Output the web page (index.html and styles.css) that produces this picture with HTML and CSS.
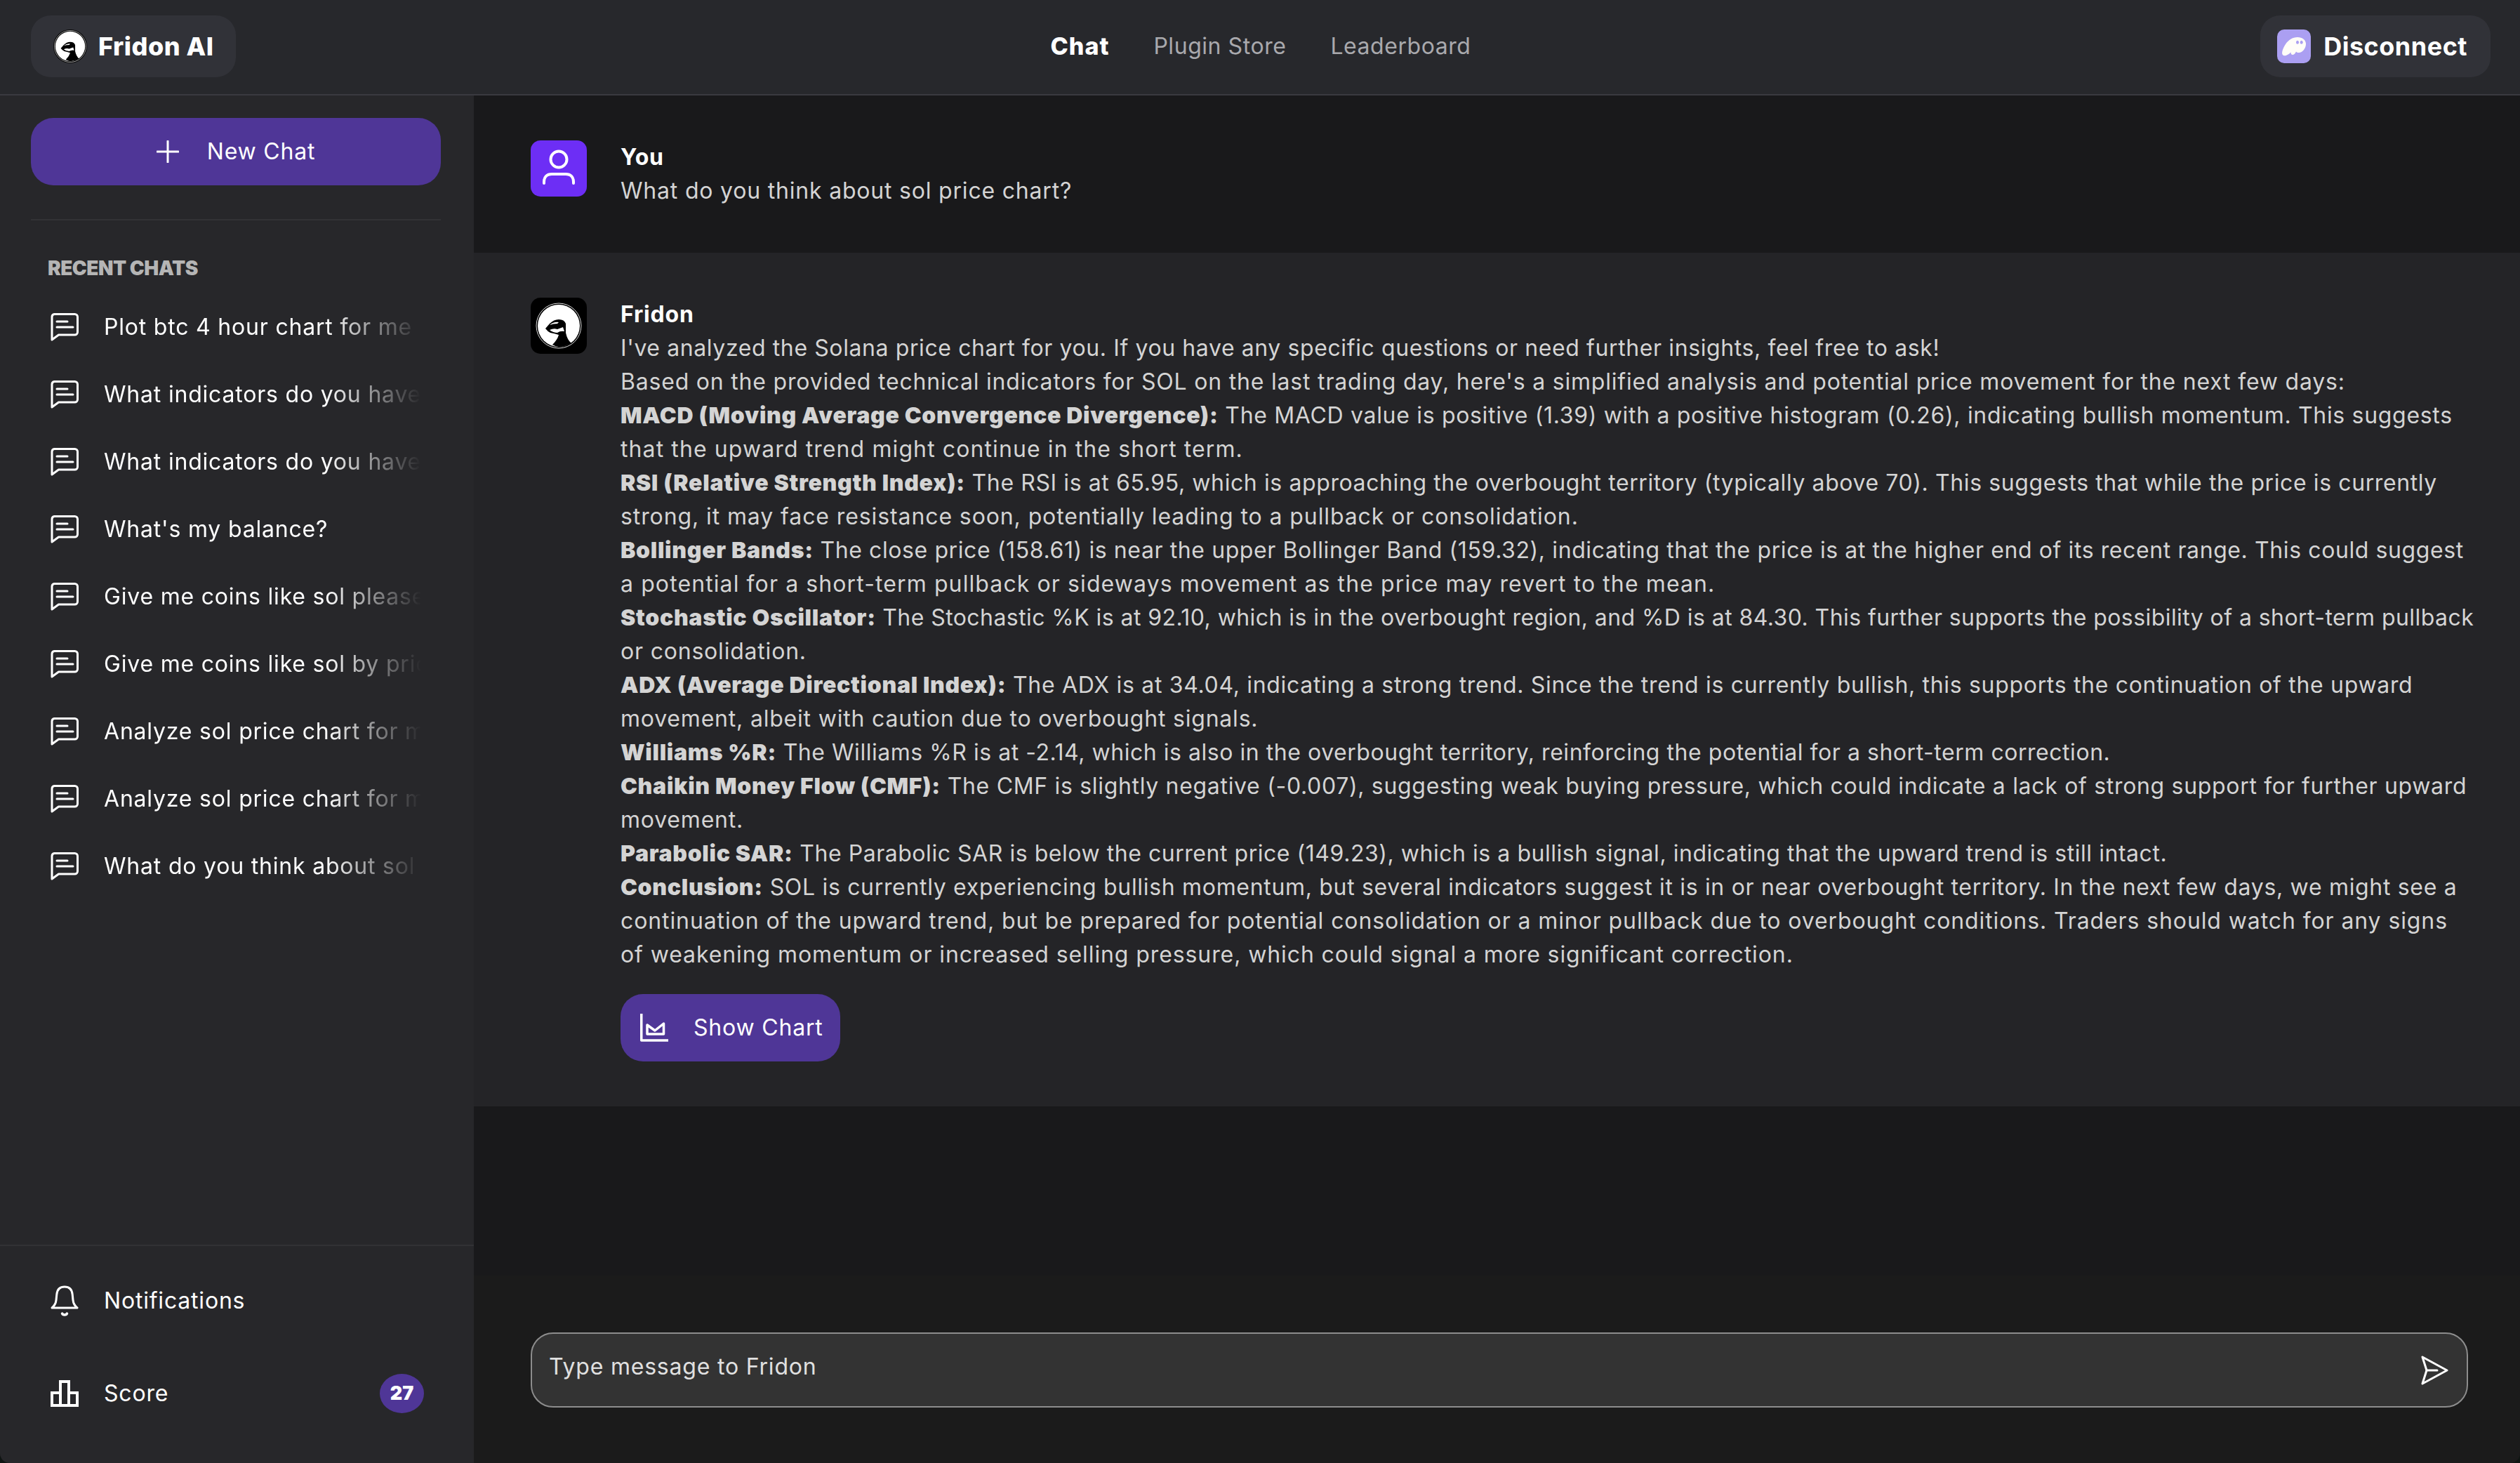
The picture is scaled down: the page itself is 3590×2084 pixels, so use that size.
FILE: index.html
```html
<!DOCTYPE html>
<html lang="en">
<head>
    <meta charset="UTF-8">
    <title>Fridon AI</title>
    <link rel="stylesheet" href="styles.css">
</head>
<body>
    <!-- shared icons -->
    <svg class="sprite">
        <defs>
            <g id="meerkat">
                <circle cx="40" cy="40" r="34" fill="#000"/>
                <circle cx="40" cy="40" r="32" fill="none" stroke="#ddd" stroke-width="1"/>
                <circle cx="40" cy="40" r="30" fill="#fff"/>
                <path d="M21 44L27 37Q33 31 40 31Q48 31 50 37Q50 44 50 50Q52 60 58 65Q49 70 40 70Q36 70 31 67Q38 60 40 53Q34 51 28 50Q24 48 21 44z" fill="#000"/>
                <path d="M27 46Q33 43 38 45L46 42L48 48Q42 47 38 50Q32 50 27 46z" fill="#fff"/>
                <path d="M27 39Q33 34 40 35L38 37Q32 37 27 39z" fill="#fff"/>
            </g>
            <symbol id="chat" viewBox="0 0 40 40">
                <path d="M5.500 1.500h29a4 4 0 0 1 4 4v21.500a4 4 0 0 1-4 4H11.500L2 38V5.500a4 4 0 0 1 3.500-4z" fill="none" stroke="#fff" stroke-width="3" stroke-linejoin="round" stroke-linecap="round"/>
                <path d="M9 12h15M9 20h23" fill="none" stroke="#fff" stroke-width="3" stroke-linecap="round"/>
            </symbol>
        </defs>
    </svg>

    <div class="app">
        <header class="topbar">
            <div class="topbar-left">
                <div class="pill">
                    <svg class="pill-logo" viewBox="6 6 68 68"><use href="#meerkat"/></svg>
                    <span class="brand">Fridon AI</span>
                </div>
            </div>
            <nav class="nav">
                <a class="nav-link nav-active">Chat</a>
                <a class="nav-link">Plugin Store</a>
                <a class="nav-link">Leaderboard</a>
            </nav>
            <div class="topbar-right">
                <div class="pill pill-wallet">
                    <svg class="wallet-icon" viewBox="0 0 48 48">
                        <rect width="48" height="48" rx="10" fill="#ab9ff2"/>
                        <path d="M9 37C5 35 8 27 12 21C16 15 22 11 29 11C36 11 41 15 41 20.500C41 27 36 33 31 33C29 33 28 32.500 27 31.500C26 34 24 36 22 36C20 36 19.500 34 19.500 32.500C17 35 12 38.500 9 37z" fill="#fffdf8"/>
                        <ellipse cx="29" cy="18.300" rx="2" ry="2.500" fill="#ab9ff2"/>
                        <ellipse cx="34.700" cy="18.300" rx="2" ry="2.500" fill="#ab9ff2"/>
                    </svg>
                    <span class="wallet-text">Disconnect</span>
                </div>
            </div>
        </header>

        <div class="body">
            <aside class="sidebar">
                <div class="sidebar-top">
                    <button class="btn-new">
                        <svg class="icon-plus" viewBox="0 0 32 32" fill="none" stroke="#fff" stroke-width="3" stroke-linecap="round"><path d="M16 1v30M1 16h30"/></svg>
                        <span>New Chat</span>
                    </button>
                    <div class="sidebar-line"></div>
                    <div class="recent-title">RECENT CHATS</div>
                    <ul class="chat-list">
                        <li class="chat-item"><svg class="icon-chat"><use href="#chat"/></svg><span class="chat-name">Plot btc 4 hour chart for me p</span></li>
                        <li class="chat-item"><svg class="icon-chat"><use href="#chat"/></svg><span class="chat-name">What indicators do you have</span></li>
                        <li class="chat-item"><svg class="icon-chat"><use href="#chat"/></svg><span class="chat-name">What indicators do you have</span></li>
                        <li class="chat-item"><svg class="icon-chat"><use href="#chat"/></svg><span class="chat-name">What's my balance?</span></li>
                        <li class="chat-item"><svg class="icon-chat"><use href="#chat"/></svg><span class="chat-name">Give me coins like sol please</span></li>
                        <li class="chat-item"><svg class="icon-chat"><use href="#chat"/></svg><span class="chat-name">Give me coins like sol by pric</span></li>
                        <li class="chat-item"><svg class="icon-chat"><use href="#chat"/></svg><span class="chat-name">Analyze sol price chart for m</span></li>
                        <li class="chat-item"><svg class="icon-chat"><use href="#chat"/></svg><span class="chat-name">Analyze sol price chart for m</span></li>
                        <li class="chat-item"><svg class="icon-chat"><use href="#chat"/></svg><span class="chat-name">What do you think about sol</span></li>
                    </ul>
                </div>
                <div class="sidebar-bottom">
                    <div class="foot-item">
                        <svg class="icon-foot" viewBox="0 0 40 46" fill="none" stroke="#fff" stroke-width="3" stroke-linejoin="round" stroke-linecap="round"><path d="M2 33c3.500-3 5.500-6 6-11l.800-8C9.500 6 14 3 20 3s10.500 3 11.200 11l.800 8c.500 5 2.500 8 6 11z"/><path d="M16.500 41c1 2.500 6 2.500 7 0" stroke-width="3.500"/></svg>
                        <span>Notifications</span>
                    </div>
                    <div class="foot-item">
                        <svg class="icon-foot" viewBox="0 0 40 46" fill="none" stroke="#fff" stroke-width="4"><path d="M2 40V22h12v18zM14 40V6h12v34zM26 40V22h12v18z"/></svg>
                        <span>Score</span>
                        <span class="badge">27</span>
                    </div>
                </div>
            </aside>

            <main class="main">
                <div class="messages">
                    <section class="msg">
                        <div class="avatar avatar-user">
                            <svg viewBox="0 0 80 80" fill="none" stroke="#fff" stroke-width="4" stroke-linecap="round"><circle cx="40" cy="27" r="11.500"/><path d="M19 61v-2c0-7 4-11 11-11h20c7 0 11 4 11 11v2"/></svg>
                        </div>
                        <div class="msg-body">
                            <div class="msg-author">You</div>
                            <div class="msg-text">What do you think about sol price chart?</div>
                        </div>
                    </section>
                    <section class="msg msg-ai">
                        <div class="avatar avatar-ai">
                            <svg viewBox="0 0 80 80"><use href="#meerkat"/></svg>
                        </div>
                        <div class="msg-body">
                            <div class="msg-author">Fridon</div>
                            <div class="msg-text">
                                <span class="line sp-b">I've analyzed the Solana price chart for you. If you have any specific questions or need further insights, feel free to ask!</span>
                                <span class="line">Based on the provided technical indicators for SOL on the last trading day, here's a simplified analysis and potential price movement for the next few days:</span>
                                <span class="line sp-c"><b>MACD (Moving Average Convergence Divergence):</b> The MACD value is positive (1.39) with a positive histogram (0.26), indicating bullish momentum. This suggests</span>
                                <span class="line sp-e">that the upward trend might continue in the short term.</span>
                                <span class="line sp-b"><b>RSI (Relative Strength Index):</b> The RSI is at 65.95, which is approaching the overbought territory (typically above 70). This suggests that while the price is currently</span>
                                <span class="line sp-d">strong, it may face resistance soon, potentially leading to a pullback or consolidation.</span>
                                <span class="line sp-b"><b>Bollinger Bands:</b> The close price (158.61) is near the upper Bollinger Band (159.32), indicating that the price is at the higher end of its recent range. This could suggest</span>
                                <span class="line sp-e">a potential for a short-term pullback or sideways movement as the price may revert to the mean.</span>
                                <span class="line sp-a"><b>Stochastic Oscillator:</b> The Stochastic %K is at 92.10, which is in the overbought region, and %D is at 84.30. This further supports the possibility of a short-term pullback</span>
                                <span class="line">or consolidation.</span>
                                <span class="line sp-c"><b>ADX (Average Directional Index):</b> The ADX is at 34.04, indicating a strong trend. Since the trend is currently bullish, this supports the continuation of the upward</span>
                                <span class="line">movement, albeit with caution due to overbought signals.</span>
                                <span class="line sp-a2"><b>Williams %R:</b> The Williams %R is at -2.14, which is also in the overbought territory, reinforcing the potential for a short-term correction.</span>
                                <span class="line sp-c"><b>Chaikin Money Flow (CMF):</b> The CMF is slightly negative (-0.007), suggesting weak buying pressure, which could indicate a lack of strong support for further upward</span>
                                <span class="line">movement.</span>
                                <span class="line sp-a2"><b>Parabolic SAR:</b> The Parabolic SAR is below the current price (149.23), which is a bullish signal, indicating that the upward trend is still intact.</span>
                                <span class="line sp-c"><b>Conclusion:</b> SOL is currently experiencing bullish momentum, but several indicators suggest it is in or near overbought territory. In the next few days, we might see a</span>
                                <span class="line sp-d">continuation of the upward trend, but be prepared for potential consolidation or a minor pullback due to overbought conditions. Traders should watch for any signs</span>
                                <span class="line sp-d">of weakening momentum or increased selling pressure, which could signal a more significant correction.</span>
                            </div>
                            <button class="btn-chart">
                                <svg class="icon-chart" viewBox="0 0 40 40" fill="none" stroke="#fff" stroke-width="3.500" stroke-linejoin="round"><path d="M1.750 0V38H40"/><path d="M10 29V16L21 24L33.500 14V29z"/></svg>
                                <span>Show Chart</span>
                            </button>
                        </div>
                    </section>
                </div>
                <div class="composer">
                    <div class="input-box">
                        <span class="input-text">Type message to Fridon</span>
                        <svg class="icon-send" viewBox="0 0 40 44" fill="none" stroke="#fff" stroke-width="3" stroke-linejoin="round" stroke-linecap="round"><path d="M3 3l35 19L3 41l6-19z"/><path d="M9 22h15"/></svg>
                    </div>
                </div>
            </main>
        </div>
    </div>
</body>
</html>
```

FILE: styles.css
```css
* {
    box-sizing: border-box;
}
html, body {
    margin: 0;
    height: 100%;
    background-color: #0f1512;
    overflow: hidden;
}
body {
    font-family: Inter, "Noto Sans", sans-serif;
    font-size: 32px;
    line-height: 48px;
    letter-spacing: 0.8px;
    color: #fff;
}
.sprite {
    display: none;
}
.app {
    height: 2084px;
    display: flex;
    flex-direction: column;
    overflow: hidden;
    border-radius: 0 0 14px 14px;
    background-color: #19191b;
}
.topbar {
    height: 136px;
    flex: none;
    padding: 22px 42px 0 44px;
    display: grid;
    grid-template-columns: 1fr auto 1fr;
    align-items: start;
    background-color: #27282c;
    border-bottom: 2px solid #3a3a40;
}
.topbar-right {
    display: flex;
    justify-content: flex-end;
}
.pill {
    display: inline-flex;
    align-items: center;
    height: 88px;
    padding: 0 32px;
    border-radius: 28px;
    background-color: #313238;
}
.pill-logo {
    width: 48px;
    height: 48px;
    margin-right: 16px;
}
.brand {
    font-size: 36px;
    font-weight: 800;
    letter-spacing: 0.5px;
}
.pill-wallet {
    padding: 0 33px 0 24px;
}
.wallet-icon {
    width: 48px;
    height: 48px;
    margin-right: 18px;
}
.wallet-text {
    font-size: 36px;
    font-weight: 700;
    letter-spacing: 0.5px;
}
.nav {
    display: flex;
    gap: 63px;
    height: 88px;
    align-items: center;
}
.nav-link {
    letter-spacing: 0.55px;
    color: #a9a9ad;
}
.nav-active {
    color: #fff;
    font-size: 34px;
    font-weight: 800;
    letter-spacing: 1px;
}
.body {
    flex: 1;
    display: flex;
    min-height: 0;
}
.sidebar {
    width: 675px;
    flex: none;
    display: flex;
    flex-direction: column;
    justify-content: space-between;
    background-color: #27272a;
}
.sidebar-top {
    padding: 32px 47px 0 44px;
}
.btn-new, .btn-chart {
    display: flex;
    align-items: center;
    border: none;
    color: #fff;
    font: inherit;
    letter-spacing: inherit;
    background-color: #4f3697;
}
.btn-new {
    width: 584px;
    height: 96px;
    padding-left: 6px;
    justify-content: center;
    gap: 40px;
    border-radius: 32px;
}
.icon-plus {
    width: 32px;
    height: 32px;
}
.sidebar-line {
    height: 2px;
    margin-top: 48px;
    width: 584px;
    background-color: #323235;
}
.recent-title {
    margin: 44px 0 0 24px;
    line-height: 48px;
    font-size: 28px;
    font-weight: 900;
    letter-spacing: -0.5px;
    color: #b5b5b5;
}
.chat-list {
    list-style: none;
    margin: 12px 0 0;
    padding: 0 0 0 28px;
}
.chat-item {
    display: flex;
    align-items: center;
    height: 96px;
    gap: 36px;
}
.icon-chat {
    width: 40px;
    height: 40px;
    flex: none;
}
.chat-name {
    width: 452px;
    white-space: nowrap;
    -webkit-mask-image: linear-gradient(to right, #000 70%, transparent 100%);
    mask-image: linear-gradient(to right, #000 70%, transparent 100%);
}
.sidebar-bottom {
    height: 311px;
    padding-top: 12px;
    border-top: 2px solid #323235;
}
.foot-item {
    display: flex;
    align-items: center;
    height: 132px;
    padding: 0 71px 0 72px;
    gap: 36px;
}
.icon-foot {
    width: 40px;
    height: 46px;
    flex: none;
}
.badge {
    margin-left: auto;
    width: 63px;
    height: 56px;
    border-radius: 50%;
    display: flex;
    align-items: center;
    justify-content: center;
    background-color: #4f3697;
    font-size: 27px;
    font-weight: 900;
    letter-spacing: 0;
}
.main {
    flex: 1;
    min-width: 0;
    display: flex;
    flex-direction: column;
}
.messages {
    flex: 1;
}
.msg {
    display: flex;
    gap: 48px;
    padding: 64px 56px 64px 81px;
    background-color: #19191b;
}
.msg-ai {
    background-color: #242427;
}
.avatar {
    width: 80px;
    height: 80px;
    flex: none;
    border-radius: 14px;
}
.avatar svg {
    display: block;
    width: 80px;
    height: 80px;
}
.avatar-user {
    background-color: #6d2ef5;
}
.avatar-ai {
    background-color: #000;
}
.msg-author {
    font-weight: 700;
}
.msg-text {
    color: #d4d4d4;
    white-space: nowrap;
}
.msg-text b {
    font-weight: 900;
    letter-spacing: 0.7px;
}
.line {
    display: block;
}
/* Inter runs a bit differently from the line lengths we want */
.sp-a {
    letter-spacing: 0.43px;
}
.sp-a2 {
    letter-spacing: 0.54px;
}
.sp-b {
    letter-spacing: 0.6px;
}
.sp-c {
    letter-spacing: 0.68px;
}
.sp-d {
    letter-spacing: 0.9px;
}
.sp-e {
    letter-spacing: 1.1px;
}
.btn-chart {
    margin-top: 32px;
    width: 313px;
    height: 96px;
    padding-left: 28px;
    gap: 36px;
    border-radius: 32px;
}
.icon-chart {
    width: 40px;
    height: 40px;
    flex: none;
}
.composer {
    height: 267px;
    flex: none;
    padding: 81px 74px 0 81px;
    background-color: #1b1b1b;
}
.input-box {
    height: 107px;
    display: flex;
    align-items: center;
    justify-content: space-between;
    padding: 0 26px 0 24px;
    border: 2px solid #8d8d8d;
    border-radius: 32px;
    background-color: #333;
}
.input-text {
    color: #e0e0e0;
    margin-top: -10px;
}
.icon-send {
    width: 40px;
    height: 44px;
}
```
